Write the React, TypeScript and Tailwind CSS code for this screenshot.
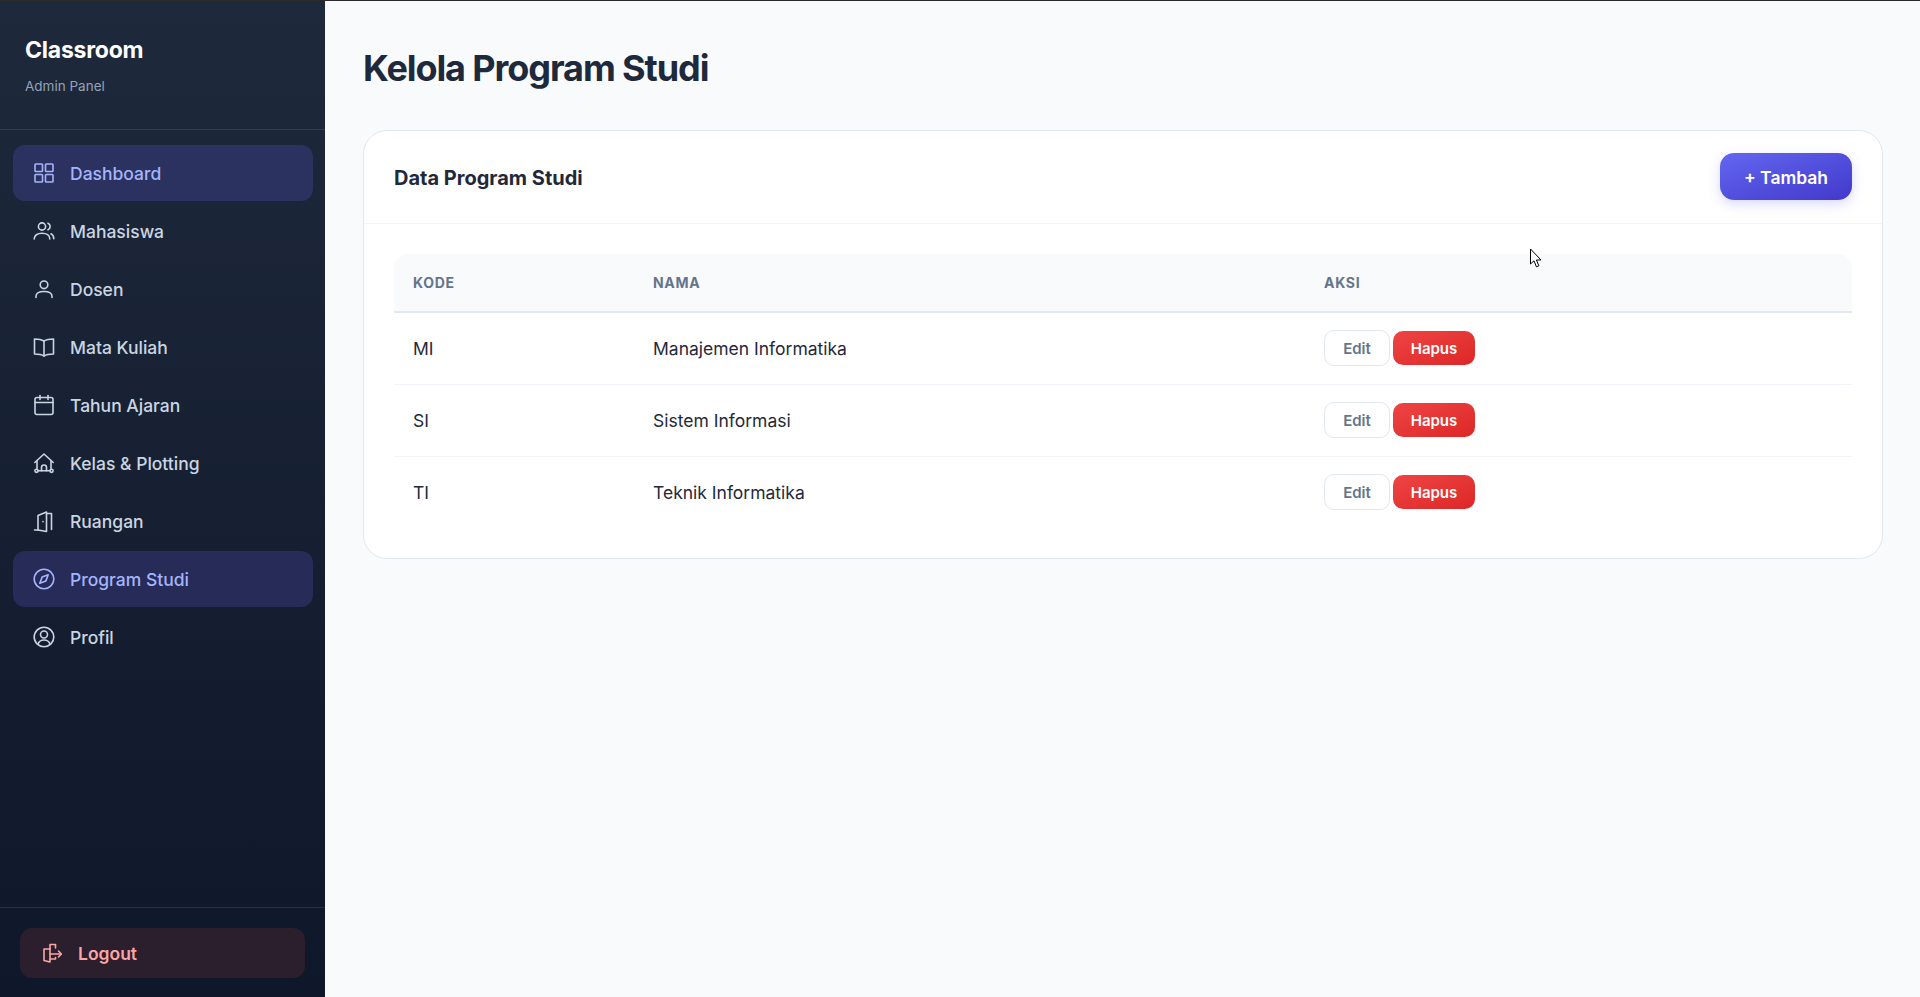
const font = { fontFamily: '"Inter", "Noto Sans", sans-serif' };

function Icon({ children, className = "" }: { children: React.ReactNode; className?: string }) {
  return (
    <svg
      viewBox="0 0 24 24"
      fill="none"
      stroke="currentColor"
      strokeWidth={1.6}
      strokeLinecap="round"
      strokeLinejoin="round"
      className={`h-6 w-6 shrink-0 ${className}`}
    >
      {children}
    </svg>
  );
}

const navItems = [
  {
    label: "Dashboard",
    active: true,
    activeBg: "bg-[#2c325f]",
    icon: (
      <>
        <rect x="3" y="3" width="7.5" height="7.5" rx="0.8" />
        <rect x="13.5" y="3" width="7.5" height="7.5" rx="0.8" />
        <rect x="3" y="13.5" width="7.5" height="7.5" rx="0.8" />
        <rect x="13.5" y="13.5" width="7.5" height="7.5" rx="0.8" />
      </>
    ),
  },
  {
    label: "Mahasiswa",
    icon: (
      <>
        <circle cx="10" cy="7.5" r="3.6" />
        <path d="M2.2 20c0-3.6 3.2-5.8 7.8-5.8s7.8 2.2 7.8 5.8" />
        <path d="M16 4.2a3.6 3.6 0 0 1 0 6.6" />
        <path d="M19 14.8c1.8.8 2.8 2.6 2.8 5" />
      </>
    ),
  },
  {
    label: "Dosen",
    icon: (
      <>
        <circle cx="12" cy="7.8" r="3.8" />
        <path d="M4 20.5v-1c0-3 3-5 8-5s8 2 8 5v1" />
      </>
    ),
  },
  {
    label: "Mata Kuliah",
    icon: (
      <>
        <path d="M12 6C10 4.8 7 4 2.5 4v15c4.500 0 7.500.6 9.500 2 2-1.400 5-2 9.500-2V4C17 4 14 4.800 12 6z" />
        <path d="M12 6v15" />
      </>
    ),
  },
  {
    label: "Tahun Ajaran",
    icon: (
      <>
        <rect x="3" y="4.500" width="18" height="17" rx="2" />
        <path d="M3 9.500h18" />
        <path d="M8 2.500v4" />
        <path d="M16 2.500v4" />
      </>
    ),
  },
  {
    label: "Kelas & Plotting",
    icon: (
      <>
        <path d="M2.800 11.500 12 3l9.200 8.500" />
        <path d="M5 9.500v8" />
        <path d="M19 9.500v8" />
        <circle cx="4.500" cy="19.800" r="1.600" />
        <circle cx="19.500" cy="19.800" r="1.600" />
        <path d="M6.100 19.800h11.800" />
        <path d="M9.500 19.800v-3.300a2.500 2.500 0 0 1 5 0v3.300" />
      </>
    ),
  },
  {
    label: "Ruangan",
    icon: (
      <>
        <path d="M2.500 21h3.500" />
        <path d="M6 21V6.500L14.500 3v19.500z" />
        <path d="M15 4.500h4.500V20.500" />
        <path d="M11 12.500v.3" />
      </>
    ),
  },
  {
    label: "Program Studi",
    active: true,
    activeBg: "bg-[#262b57]",
    icon: (
      <>
        <circle cx="12" cy="12" r="9.800" />
        <path d="m16.200 7.800-2.300 6.100-6.100 2.300 2.300-6.100z" />
      </>
    ),
  },
  {
    label: "Profil",
    icon: (
      <>
        <circle cx="12" cy="12" r="9.800" />
        <circle cx="12" cy="9.500" r="3.500" />
        <path d="M6 19c1-2.700 3.200-4 6-4s5 1.300 6 4" />
      </>
    ),
  },
];

const rows = [
  { kode: "MI", nama: "Manajemen Informatika" },
  { kode: "SI", nama: "Sistem Informasi" },
  { kode: "TI", nama: "Teknik Informatika" },
];

export default function App() {
  return (
    <div className="relative flex h-screen flex-col overflow-hidden bg-[#f8fafc]" style={font}>
      <div className="h-px shrink-0 bg-[#2b2b2b]" />
      <div className="flex min-h-0 flex-1">
        {/* Sidebar */}
        <aside className="flex w-[325px] shrink-0 flex-col bg-gradient-to-b from-[#1e293b] to-[#0f172a]">
          <div className="h-[129px] shrink-0 border-b border-white/10 pt-[34px] pl-[25px]">
            <div className="text-[23px] leading-[30px] font-bold tracking-[-0.01em] text-white">Classroom</div>
            <div className="mt-3 text-[13.500px] leading-[18px] text-[#94a3b8]">Admin Panel</div>
          </div>
          <nav className="flex flex-1 flex-col gap-[2px] pt-[15px] pr-3 pl-[13px]">
            {navItems.map((item) => (
              <a
                key={item.label}
                className={`flex h-[56px] items-center gap-[14px] rounded-xl px-[19px] text-[17.500px] font-medium ${
                  item.active ? `${item.activeBg} text-[#a5b4fc]` : "text-[#cbd5e1]"
                }`}
              >
                <Icon>{item.icon}</Icon>
                <span className="pt-[2px]">{item.label}</span>
              </a>
            ))}
          </nav>
          <div className="border-t border-white/10 px-5 pt-5 pb-[19px]">
            <button className="flex h-[50px] w-full items-center gap-[14px] rounded-xl bg-[#2b1e2d] px-5 text-[17.500px] font-semibold text-[#fca5a5]">
              <Icon>
                <path d="M10 21 4 19.500V8h6z" />
                <path d="M10 8V3.500h5.500V7" />
                <path d="M10 13h11" />
                <path d="m18.500 10 2.800 3-2.800 3" />
                <path d="M10 18h5.500v-1.500" />
              </Icon>
              <span className="pt-[2px]">Logout</span>
            </button>
          </div>
        </aside>

        {/* Main */}
        <main className="min-w-0 flex-1 pt-[45px] pr-[37px] pl-[38px]">
          <h1 className="mb-[40px] text-[36px] leading-[44px] font-bold tracking-[-0.03em] text-[#1e293b]">
            Kelola Program Studi
          </h1>
          <section className="rounded-[24px] border border-[#e2e8f0] bg-white">
            <div className="flex items-center justify-between border-b border-[#f1f5f9] px-[30px] pt-[22px] pb-[23px]">
              <h2 className="pt-[2px] text-[20px] font-bold text-[#1e293b]">Data Program Studi</h2>
              <button className="h-[47px] w-[132px] rounded-[14px] bg-gradient-to-br from-[#6366f1] to-[#4338ca] pt-[4px] text-[17.500px] font-semibold text-white shadow-[0_4px_12px_rgba(99,102,241,0.25)]">
                + Tambah
              </button>
            </div>
            <div className="p-[30px]">
              <table className="w-full table-fixed border-collapse">
                <thead>
                  <tr className="bg-[#f8fafc]">
                    <th className="h-[58px] w-[239px] rounded-tl-[14px] border-b-2 border-[#e2e8f0] pl-[19px] text-left text-[14px] font-bold tracking-[0.05em] text-[#64748b]">
                      KODE
                    </th>
                    <th className="h-[58px] w-[671px] border-b-2 border-[#e2e8f0] pl-[20px] text-left text-[14px] font-bold tracking-[0.05em] text-[#64748b]">
                      NAMA
                    </th>
                    <th className="h-[58px] rounded-tr-[14px] border-b-2 border-[#e2e8f0] pl-[20px] text-left text-[14px] font-bold tracking-[0.05em] text-[#64748b]">
                      AKSI
                    </th>
                  </tr>
                </thead>
                <tbody>
                  {rows.map((row, i) => (
                    <tr key={row.kode} className={i < rows.length - 1 ? "border-b border-[#f1f5f9]" : ""}>
                      <td className="h-[72px] pt-[2px] pl-[19px] text-[17.500px] text-[#1e293b]">{row.kode}</td>
                      <td className="h-[72px] pt-[2px] pl-[20px] text-[17.500px] text-[#1e293b]">{row.nama}</td>
                      <td className="h-[72px] pl-[20px]">
                        <div className="flex items-center gap-[3px]">
                          <button className="h-[36px] w-[66px] rounded-[10px] border border-[#e2e8f0] bg-white pt-[2px] text-[15px] font-semibold text-[#64748b]">
                            Edit
                          </button>
                          <button className="h-[34px] w-[82px] rounded-[10px] bg-gradient-to-br from-[#ef4444] to-[#dc2626] pt-[2px] text-[15px] font-semibold text-white">
                            Hapus
                          </button>
                        </div>
                      </td>
                    </tr>
                  ))}
                </tbody>
              </table>
            </div>
          </section>
        </main>
      </div>

      {/* mouse cursor captured in the screenshot */}
      <svg viewBox="0 0 12 20" className="absolute top-[248px] left-[1530px] h-[21px] w-3">
        <path
          d="M.5.5v15l3.500-3.200 2.400 6 2.500-1-2.500-5.800h4.600z"
          fill="#fff"
          stroke="#000"
          strokeWidth="1"
          strokeLinejoin="round"
        />
      </svg>
    </div>
  );
}
